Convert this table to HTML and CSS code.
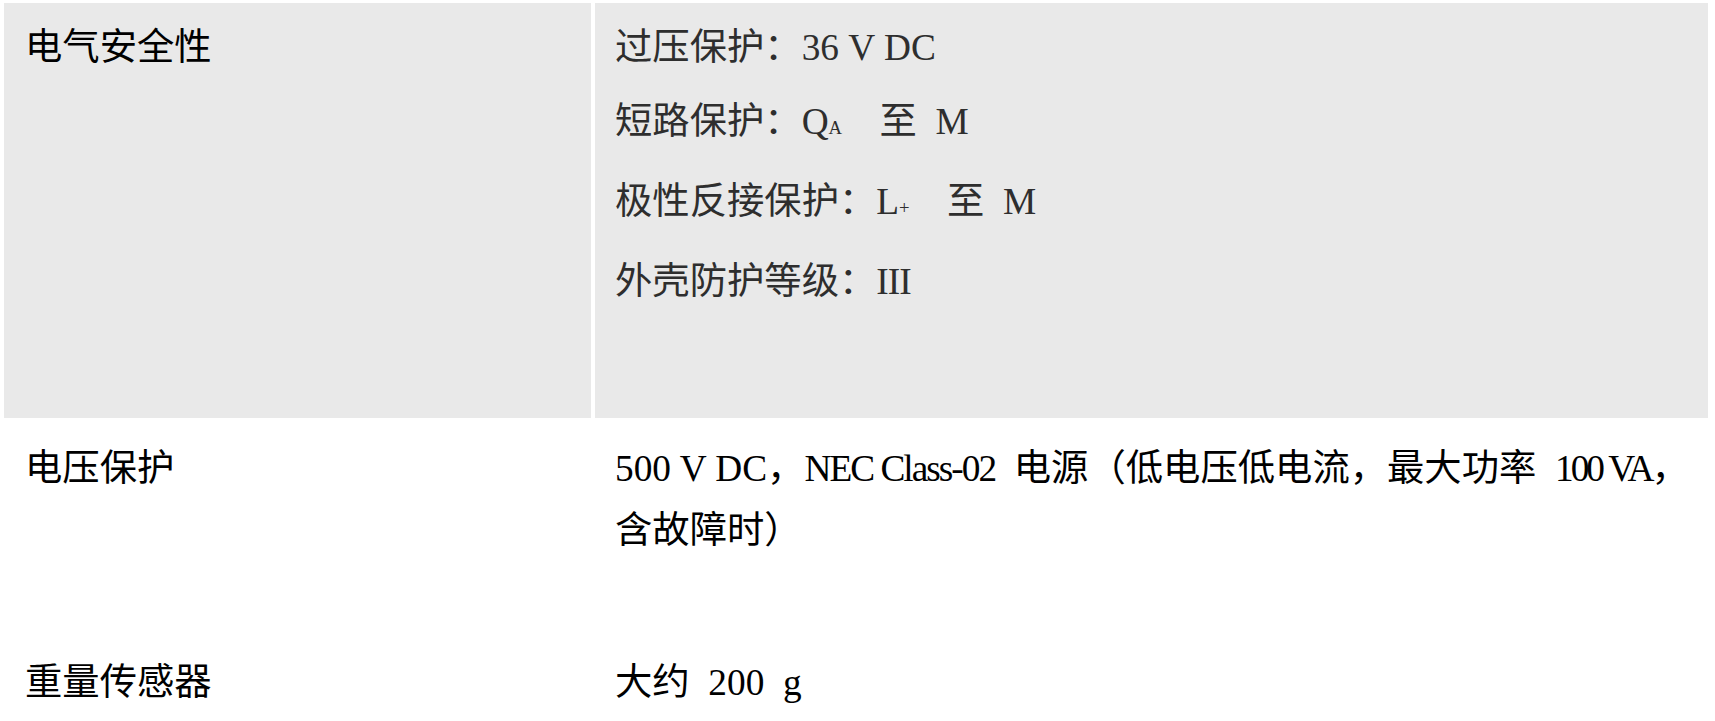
FILE: index.html
```html
<!DOCTYPE html>
<html lang="zh-CN">
<head>
<meta charset="utf-8">
<title>技术参数</title>
<link rel="stylesheet" href="styles.css">
</head>
<body>
<div class="spec">
  <div class="cell label shaded tall">电气安全性</div>
  <div class="cell value shaded tall">
    <p class="line">过压保护：<span class="lat">36 V DC</span></p>
    <p class="line">短路保护：Q<span class="idx">A</span>　至&ensp;M</p>
    <p class="line">极性反接保护：L<span class="idx">+</span>　至&ensp;M</p>
    <p class="line">外壳防护等级：<span class="roman">III</span></p>
  </div>

  <div class="cell label mid">电压保护</div>
  <div class="cell value mid black"><span class="run">500 V DC，<span class="squeeze">NEC Class-02</span>&ensp;电源（低电压低电流，最大功率&ensp;<span class="squeeze2">100 VA</span>，</span><br><span class="run">含故障时）</span></div>

  <div class="cell label low">重量传感器</div>
  <div class="cell value black low">大约&ensp;200&ensp;g</div>
</div>
</body>
</html>
```

FILE: styles.css
```css
html, body {
  margin: 0;
  padding: 0;
  background: #ffffff;
}

body {
  font-family: "Liberation Serif", "Noto Sans CJK SC", serif;
  font-size: 28pt;
  line-height: 66px;
  color: #111111;
}

.spec {
  display: grid;
  grid-template-columns: 587px 1fr;
  column-gap: 4px;
  row-gap: 4px;
  padding: 3px 7px 0 4px;
}

.cell {
  padding-top: 9px;
  padding-bottom: 20px;
}

.label {
  padding-left: 21px;
  padding-right: 12px;
  color: #000000;
}

.value {
  padding-left: 20px;
  padding-right: 4px;
  color: #2e2e2e;
}

.value.black {
  color: #000000;
}

.shaded {
  background: #e9e9e9;
}

.tall {
  padding-top: 12px;
  padding-bottom: 103px;
}

.mid {
  line-height: 62px;
  padding-top: 16px;
  padding-bottom: 75px;
}

.low {
  padding-top: 9px;
}

.line {
  margin: 0 0 8px 0;
}

.line:last-child {
  margin-bottom: 0;
}

.idx {
  font-size: 0.5em;
}

.roman {
  letter-spacing: -1px;
}

.squeeze {
  letter-spacing: -2px;
}

.squeeze2 {
  letter-spacing: -3px;
}
```
